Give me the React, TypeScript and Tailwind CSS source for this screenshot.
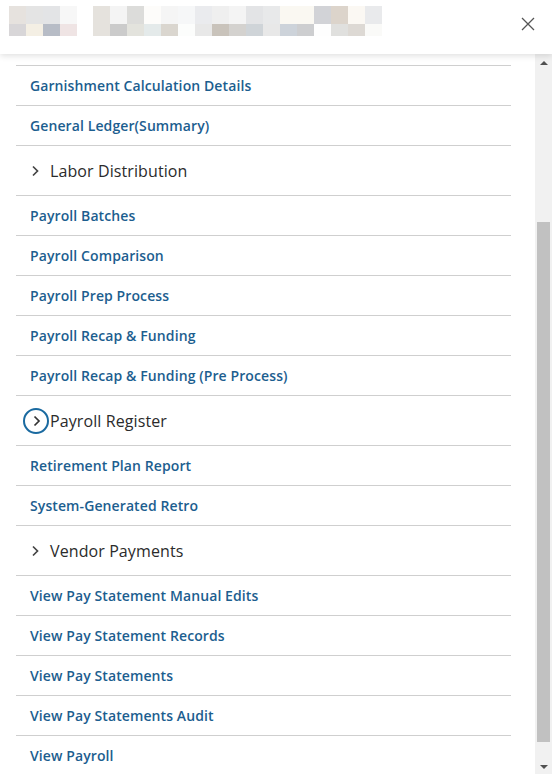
import { Fragment } from 'react'

type Item = { label: string; kind: 'link' | 'group'; focused?: boolean }

const items: Item[] = [
  { label: 'Garnishment Calculation Details', kind: 'link' },
  { label: 'General Ledger(Summary)', kind: 'link' },
  { label: 'Labor Distribution', kind: 'group' },
  { label: 'Payroll Batches', kind: 'link' },
  { label: 'Payroll Comparison', kind: 'link' },
  { label: 'Payroll Prep Process', kind: 'link' },
  { label: 'Payroll Recap & Funding', kind: 'link' },
  { label: 'Payroll Recap & Funding (Pre Process)', kind: 'link' },
  { label: 'Payroll Register', kind: 'group', focused: true },
  { label: 'Retirement Plan Report', kind: 'link' },
  { label: 'System-Generated Retro', kind: 'link' },
  { label: 'Vendor Payments', kind: 'group' },
  { label: 'View Pay Statement Manual Edits', kind: 'link' },
  { label: 'View Pay Statement Records', kind: 'link' },
  { label: 'View Pay Statements', kind: 'link' },
  { label: 'View Pay Statements Audit', kind: 'link' },
  { label: 'View Payroll', kind: 'link' },
]

// blurred title, drawn as a mosaic
const mosaicA = [
  ['#e6e2de', '#e4e4e4', '#e3e4e6', '#f7f7f7'],
  ['#d8d6d8', '#f4efe4', '#b7bcc6', '#efe4e4'],
]
const mosaicB = [
  ['#e5e2dd', '#f4f4f4', '#dcdcda', '#fdfcfa', '#f5f5f5', '#f6f7f8', '#eaebee', '#efefef', '#f4f4f4', '#e3e4e6', '#e8e9ea', '#faf8f2', '#faf8f2', '#d2d3d7', '#dcd4cb', '#fbf8f3', '#e9eaec'],
  ['#e5e2dd', '#cbcbcb', '#e3e3dd', '#e4eaea', '#dad6cf', '#fcfdfc', '#e8e8e8', '#c9c3bb', '#d4d2cf', '#cfd4d8', '#e8e8e8', '#cdd3da', '#cdced0', '#fefefe', '#e0e0de', '#ddd9d4', '#fafaf8'],
]

function Mosaic({ rows }: { rows: string[][] }) {
  return (
    <div className="flex flex-col">
      {rows.map((row, r) => (
        <div key={r} className={`flex ${r === 0 ? 'h-[18px]' : 'h-[12px]'}`}>
          {row.map((c, i) => (
            <div key={i} className="w-[17px] h-full" style={{ backgroundColor: c }} />
          ))}
        </div>
      ))}
    </div>
  )
}

function Chevron() {
  return (
    <svg width="10" height="14" viewBox="0 0 10 14" className="shrink-0">
      <path d="M3 2.5l4.5 4.5-4.5 4.5" fill="none" stroke="#444" strokeWidth="1.7" />
    </svg>
  )
}

export default function App() {
  return (
    <div className="w-[552px] h-[774px] flex flex-col bg-white overflow-hidden" style={{ fontFamily: '"Open Sans", "Liberation Sans", sans-serif' }}>
      <div className="h-[54px] shrink-0 flex items-start pt-[6px] pl-[9px] pr-[16px] bg-white shadow-[0_2px_6px_rgba(0,0,0,0.12)] relative z-10">
        <div className="flex gap-[16px]">
          <Mosaic rows={mosaicA} />
          <Mosaic rows={mosaicB} />
        </div>
        <button className="ml-auto mt-[10px] text-[#555]">
          <svg width="16" height="16" viewBox="0 0 16 16">
            <path d="M2 2l12 12M14 2L2 14" stroke="#555" strokeWidth="1.3" />
          </svg>
        </button>
      </div>

      <div className="flex flex-1 min-h-0">
        <div className="flex-1 pl-[16px] pr-[24px] pt-[11px]">
          <div className="border-t border-[#cfcfcf]">
            {items.map((it) => (
              <Fragment key={it.label}>
                {it.kind === 'link' ? (
                  <div className="h-[40px] flex items-center pl-[14px] border-b border-[#cfcfcf] text-[14px] font-semibold tracking-[0.1px] text-[#1c5e8f]">
                    {it.label}
                  </div>
                ) : (
                  <div className="h-[50px] flex items-center border-b border-[#cfcfcf] text-[16px] tracking-[0.1px] text-[#2b2b2b]">
                    {it.focused ? (
                      <span className="w-[26px] h-[26px] ml-[7px] mr-px rounded-full border-2 border-[#1a6aa0] flex items-center justify-center">
                        <svg width="10" height="14" viewBox="0 0 10 14">
                          <path d="M3.5 2.5l4.5 4.5-4.5 4.5" fill="none" stroke="#333" strokeWidth="1.7" />
                        </svg>
                      </span>
                    ) : (
                      <span className="ml-[14px] mr-[10px] flex"><Chevron /></span>
                    )}
                    {it.label}
                  </div>
                )}
              </Fragment>
            ))}
          </div>
        </div>

        <div className="w-[17px] shrink-0 bg-[#f1f1f1] flex flex-col items-center">
          <div className="h-[17px] flex items-center justify-center">
            <div className="w-0 h-0 border-l-[4px] border-r-[4px] border-b-[4px] border-l-transparent border-r-transparent border-b-[#505050]" />
          </div>
          <div className="h-[151px]" />
          <div className="w-[13px] h-[520px] bg-[#c1c1c1]" />
          <div className="flex-1 flex items-end justify-center pb-[5px]">
            <div className="w-0 h-0 border-l-[4px] border-r-[4px] border-t-[4px] border-l-transparent border-r-transparent border-t-[#505050]" />
          </div>
        </div>
      </div>
    </div>
  )
}
